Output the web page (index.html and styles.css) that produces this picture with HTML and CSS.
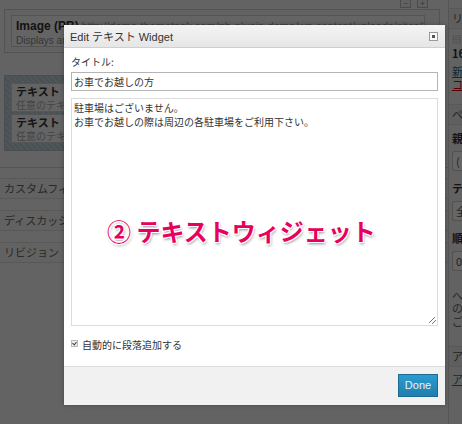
FILE: index.html
```html
<!DOCTYPE html>
<html lang="ja">
<head>
<meta charset="utf-8">
<link rel="stylesheet" href="styles.css">
</head>
<body>
<div class="page">
  <div class="main">
    <div class="tools"><span class="tbtn">−</span><span class="tbtn">+</span></div>
    <div class="area">
      <div class="widget">
        <div class="w-title"><b>Image (PB)</b> <span class="url">http://demo-themetank.com/pb-plugin-demo/wp-content/uploads/sites/1/</span></div>
        <div class="w-desc">Displays an image with a link</div>
      </div>
    </div>
    <div class="striped">
      <div class="witem"><div class="wt"><b>テキスト</b> <span class="num">1</span></div><div class="wd">任意のテキストまたはHTML</div></div>
      <div class="witem"><div class="wt"><b>テキスト</b> <span class="num">2</span></div><div class="wd">任意のテキストまたはHTML</div></div>
    </div>
    <div class="sep"></div>
    <div class="postbox">カスタムフィールド</div>
    <div class="postbox">ディスカッション</div>
    <div class="postbox">リビジョン</div>
  </div>
  <div class="side">
    <div class="s-box s-h1">リ</div>
    <div class="s-cal">▤</div>
    <div class="s-num">16</div>
    <div class="s-link">新</div>
    <div class="s-red">コ</div>
    <div class="s-box s-h2">ペ</div>
    <div class="s-lbl">親</div>
    <div class="s-sel">(</div>
    <div class="s-lbl s-l2">テ</div>
    <div class="s-sel">全</div>
    <div class="s-lbl s-l3">順</div>
    <div class="s-sel">0</div>
    <div class="s-txt">へ<br>の<br>ご</div>
    <div class="s-box s-h3">ア</div>
    <div class="s-link2">ア</div>
  </div>
</div>
<div class="overlay"></div>
<div class="dialog">
  <div class="d-head">
    <span class="d-title">Edit テキスト Widget</span>
    <span class="d-close"></span>
  </div>
  <div class="d-body">
    <div class="label">タイトル:</div>
    <div class="input">お車でお越しの方</div>
    <div class="textarea">駐車場はございません。<br>お車でお越しの際は周辺の各駐車場をご利用下さい。<span class="grip"></span></div>
    <div class="check-row"><span class="cbox"></span><span>自動的に段落追加する</span></div>
  </div>
  <div class="d-foot"><span class="done">Done</span></div>
</div>
<div class="annot">② テキストウィジェット</div>
</body>
</html>
```

FILE: styles.css
```css
html, body {
  margin: 0;
  padding: 0;
}
body {
  width: 462px;
  height: 424px;
  overflow: hidden;
  background: #f8f8f8;
  font-family: "Liberation Sans", "Noto Sans CJK JP", sans-serif;
  color: #333;
  position: relative;
}
.page {
  display: flex;
  width: 462px;
  height: 424px;
}
.main {
  width: 448px;
  flex: none;
  display: flex;
  flex-direction: column;
}
.tools {
  height: 8px;
  display: flex;
  justify-content: flex-end;
  gap: 6px;
  padding-right: 20px;
}
.tbtn {
  width: 9px;
  height: 7px;
  border: 1px solid #bbb;
  border-top: none;
  background: #f2f2f2;
  font-size: 7px;
  line-height: 7px;
  text-align: center;
  color: #777;
}
.area {
  margin: 1px 8px 0 4px;
  height: 44px;
  border: 1px solid #d0d0d0;
  padding: 5px 14px 0 6px;
  box-sizing: border-box;
  background: #f6f6f6;
}
.widget {
  height: 32px;
  border: 1px solid #cfcfcf;
  background: #fafafa;
  padding: 4px 4px 0;
  box-sizing: border-box;
  overflow: hidden;
  white-space: nowrap;
  font-size: 11px;
  line-height: 13px;
}
.w-title b {
  color: #333;
  font-size: 12px;
}
.url {
  color: #999;
}
.w-desc {
  color: #888;
  font-size: 10px;
  line-height: 15px;
}
.striped {
  margin: 22px 8px 0 4px;
  height: 76px;
  box-sizing: border-box;
  padding: 7px 6px;
  background: repeating-linear-gradient(45deg, #c8d6dc 0 2px, #b9cad1 2px 4px);
  border: 1px solid #b4c4cb;
  display: flex;
  flex-direction: column;
  gap: 2px;
}
.witem {
  height: 30px;
  background: #f9f9f9;
  border: 1px solid #cdd6da;
  box-sizing: border-box;
  padding: 1px 4px;
  font-size: 11px;
  line-height: 14px;
  white-space: nowrap;
  overflow: hidden;
}
.wt b {
  color: #333;
}
.num {
  color: #999;
  margin-left: 8px;
}
.wd {
  color: #aaa;
  font-size: 10px;
}
.sep {
  margin-top: 16px;
  height: 10px;
  border-top: 1px solid #d8d8d8;
}
.postbox {
  height: 19px;
  margin-bottom: 11px;
  border-top: 1px solid #dcdcdc;
  border-bottom: 1px solid #dcdcdc;
  background: #f5f5f5;
  font-size: 11px;
  line-height: 19px;
  padding-left: 4px;
  color: #666;
  font-family: "Noto Sans CJK JP", sans-serif;
  white-space: nowrap;
}
.side {
  width: 14px;
  flex: none;
  border-left: 1px solid #d8d8d8;
  background: #f5f5f5;
  font-size: 11px;
  font-family: "Noto Sans CJK JP", sans-serif;
  color: #555;
  overflow: hidden;
  padding-left: 3px;
  box-sizing: border-box;
  white-space: nowrap;
  display: flex;
  flex-direction: column;
}
.s-box {
  margin-left: -3px;
  padding-left: 3px;
  border-top: 1px solid #ddd;
  border-bottom: 1px solid #ddd;
  background: #eee;
  height: 19px;
  line-height: 19px;
}
.s-h1 { margin-top: 8px; }
.s-cal { margin-top: 5px; font-size: 9px; line-height: 12px; color: #888; }
.s-num { font-weight: bold; line-height: 14px; color: #333; }
.s-link { margin-top: 4px; color: #21759b; text-decoration: underline; line-height: 14px; }
.s-red { color: #d00; text-decoration: underline; line-height: 12px; }
.s-h2 { margin-top: 14px; }
.s-lbl { margin-top: 6px; font-weight: bold; line-height: 14px; color: #333; }
.s-l2, .s-l3 { margin-top: 10px; }
.s-sel {
  margin-top: 6px;
  height: 18px;
  border: 1px solid #ccc;
  border-right: none;
  border-radius: 3px 0 0 3px;
  background: #fff;
  line-height: 18px;
  padding-left: 3px;
}
.s-txt { margin-top: 18px; line-height: 13px; color: #666; }
.s-h3 { margin-top: 18px; }
.s-link2 { margin-top: 4px; color: #21759b; text-decoration: underline; }

.overlay {
  position: absolute;
  inset: 0;
  background: rgba(0, 0, 0, 0.6);
}
.dialog {
  position: absolute;
  left: 64px;
  top: 25px;
  width: 381px;
  height: 380px;
  background: #fff;
  display: flex;
  flex-direction: column;
  box-shadow: 0 0 4px rgba(0, 0, 0, 0.3);
}
.d-head {
  height: 23px;
  box-sizing: border-box;
  border-bottom: 1px solid #cfcfcf;
  background: linear-gradient(#f4f4f4, #e6e6e6);
  display: flex;
  align-items: center;
  justify-content: space-between;
  padding: 0 7px 0 6px;
}
.d-title {
  font-size: 11px;
  color: #333;
}
.d-close {
  width: 9px;
  height: 9px;
  box-sizing: border-box;
  border: 1px solid #999;
  background: #fafafa;
  position: relative;
}
.d-close::after {
  content: "";
  position: absolute;
  left: 2px;
  top: 2px;
  width: 3px;
  height: 3px;
  background: #555;
}
.d-body {
  flex: 1;
  padding: 7px 7px 0 7px;
  font-family: "Noto Sans CJK JP", sans-serif;
  font-size: 10px;
  color: #333;
}
.label {
  line-height: 14px;
  height: 15px;
  margin-bottom: 2px;
}
.input {
  height: 19px;
  box-sizing: border-box;
  border: 1px solid #b4b4b4;
  line-height: 17px;
  padding-left: 2px;
}
.textarea {
  margin-top: 7px;
  height: 228px;
  box-sizing: border-box;
  border: 1px solid #dcdcdc;
  padding: 2px 2px;
  line-height: 14px;
  position: relative;
}
.grip {
  position: absolute;
  right: 1px;
  bottom: 1px;
  width: 7px;
  height: 7px;
  background: linear-gradient(135deg, transparent 0 40%, #777 40% 50%, transparent 50% 65%, #777 65% 75%, transparent 75%);
}
.check-row {
  margin-top: 12px;
  display: flex;
  align-items: center;
  gap: 4px;
  line-height: 14px;
}
.cbox {
  width: 5px;
  height: 5px;
  border: 1px solid #bbb;
  background: #eee;
  position: relative;
  margin-top: -3px;
}
.cbox::after {
  content: "";
  position: absolute;
  left: 1px;
  top: 0;
  width: 2px;
  height: 3px;
  border: solid #444;
  border-width: 0 1px 1px 0;
  transform: rotate(40deg);
}
.d-foot {
  height: 39px;
  box-sizing: border-box;
  border-top: 1px solid #dcdcdc;
  background: #f1f1f1;
  display: flex;
  justify-content: flex-end;
  align-items: flex-start;
  padding: 7px 7px 0 0;
}
.done {
  width: 40px;
  height: 23px;
  box-sizing: border-box;
  border: 1px solid #1b6a8f;
  background: linear-gradient(#2b9bd0, #1f7eae);
  color: #e8f4fa;
  font-size: 11px;
  line-height: 21px;
  text-align: center;
}
.annot {
  position: absolute;
  left: 107px;
  top: 215px;
  font-family: "Noto Sans CJK JP", sans-serif;
  font-weight: bold;
  font-size: 24px;
  line-height: 32px;
  color: #e8005e;
  white-space: nowrap;
  text-shadow:
    1px 0 0 #fff, -1px 0 0 #fff, 0 1px 0 #fff, 0 -1px 0 #fff,
    1px 1px 0 #fff, -1px -1px 0 #fff, 1px -1px 0 #fff, -1px 1px 0 #fff,
    1px 2px 3px rgba(0, 0, 0, 0.45);
}
```
